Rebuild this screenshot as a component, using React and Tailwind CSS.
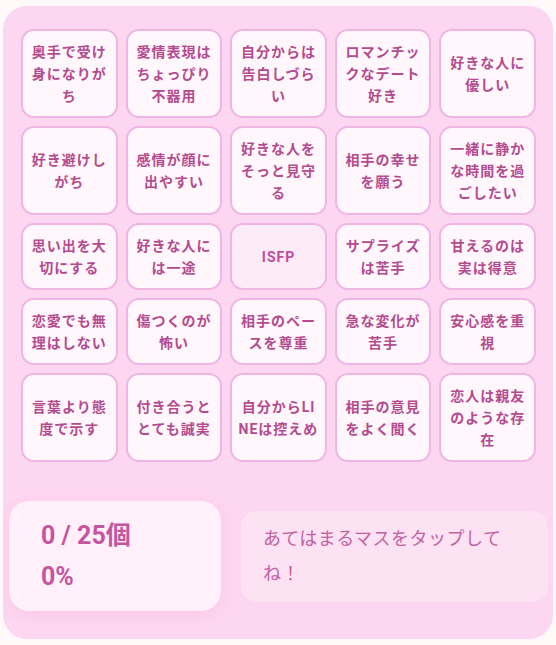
import React from 'react';

const cells = [
  '奥手で受け身になりがち',
  '愛情表現はちょっぴり不器用',
  '自分からは告白しづらい',
  'ロマンチックなデート好き',
  '好きな人に優しい',
  '好き避けしがち',
  '感情が顔に出やすい',
  '好きな人をそっと見守る',
  '相手の幸せを願う',
  '一緒に静かな時間を過ごしたい',
  '思い出を大切にする',
  '好きな人には一途',
  'ISFP',
  'サプライズは苦手',
  '甘えるのは実は得意',
  '恋愛でも無理はしない',
  '傷つくのが怖い',
  '相手のペースを尊重',
  '急な変化が苦手',
  '安心感を重視',
  '言葉より態度で示す',
  '付き合うととても誠実',
  '自分からLINEは控えめ',
  '相手の意見をよく聞く',
  '恋人は親友のような存在',
];

const Cell = ({ label }) => {
  const isCenter = label === 'ISFP';
  return (
    <button
      className={`flex items-center justify-center rounded-[13px] border-2 border-[#efb6e3] px-[6px] py-[9.5px] text-center text-[14px] font-bold leading-[22px] tracking-[1px] break-all ${
        isCenter ? 'bg-[#fdebf7] text-[#c24d9c]' : 'bg-[#fff7fc] text-[#b44b8e]'
      }`}
    >
      {label}
    </button>
  );
};

export default function App() {
  return (
    <div
      className="min-h-screen bg-[#fffaf9] pt-[6px] px-[3px]"
      style={{ fontFamily: 'Roboto, "Noto Sans CJK JP", sans-serif' }}
    >
      <div className="w-[550px] rounded-[24px] bg-[#fdd6f1] pr-[17px] pl-[18px] pt-[23px] pb-[28px]">
        <div className="grid grid-cols-5 gap-[8px]">
          {cells.map((c) => (
            <Cell key={c} label={c} />
          ))}
        </div>

        <div className="-mx-[12px] mt-[39px] flex items-center gap-[20px]">
          <div className="flex h-[110px] w-[212px] flex-col justify-center rounded-[20px] bg-[#fff0f9] pl-[32px] text-[25px] font-bold leading-[41px] text-[#c4559f] shadow-[0_4px_14px_rgba(236,72,153,0.08)]">
            <div>0 / 25個</div>
            <div>0%</div>
          </div>
          <div className="flex h-[91px] flex-1 items-center rounded-[16px] bg-[#fde2f4] pl-[22px] pr-[36px] text-[18px] leading-[35px] tracking-[0.5px] text-[#c461a3]">
            <p>あてはまるマスをタップしてね！</p>
          </div>
        </div>
      </div>
    </div>
  );
}
